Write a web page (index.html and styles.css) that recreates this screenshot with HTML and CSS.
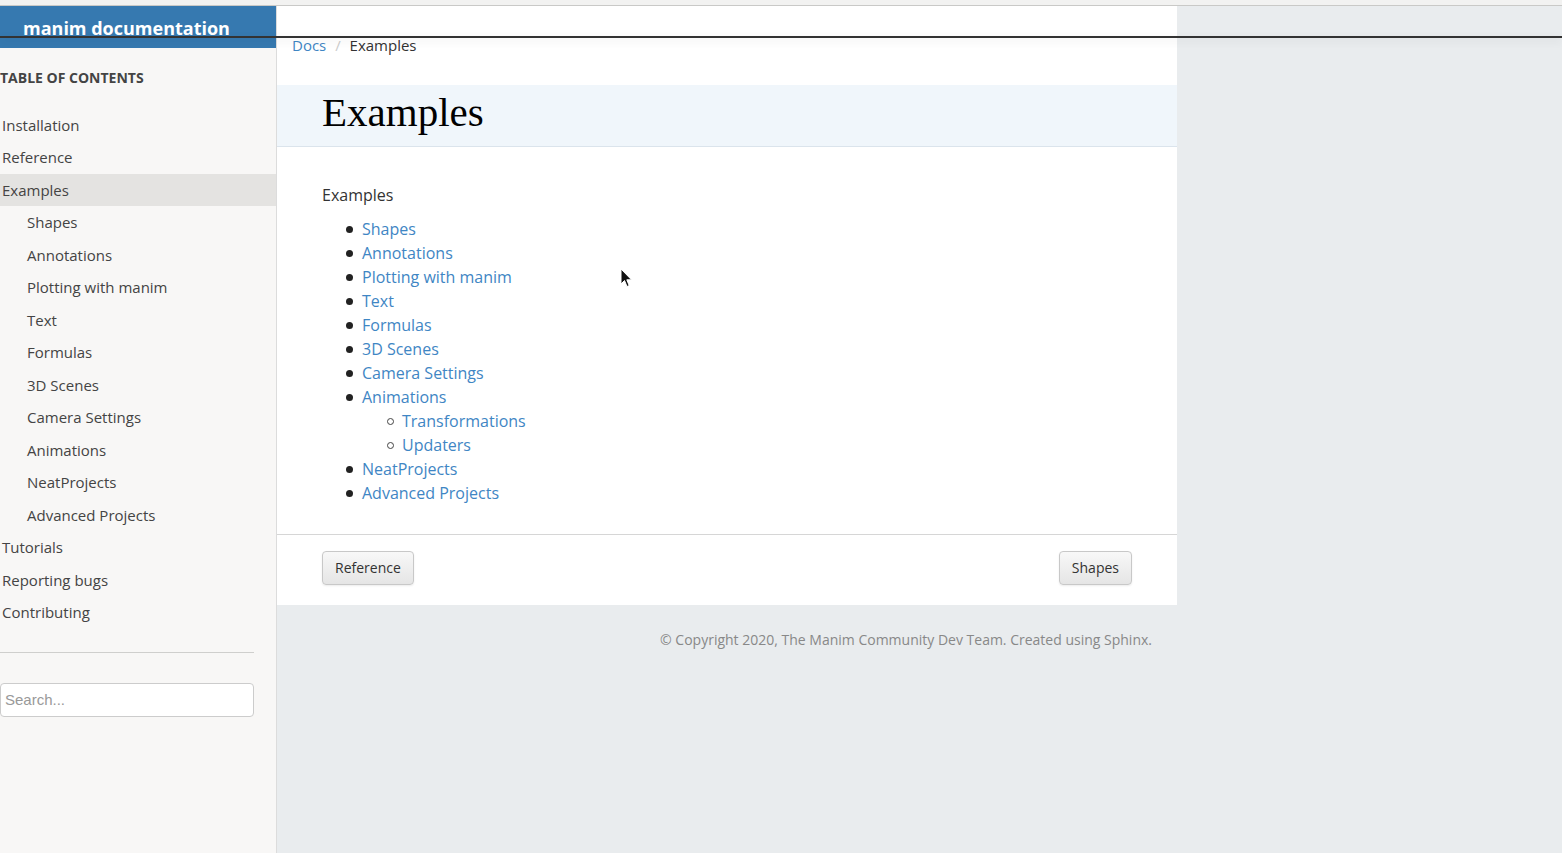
FILE: index.html
```html
<!DOCTYPE html>
<html lang="en">
<head>
    <meta charset="UTF-8">
    <meta name="viewport" content="width=device-width, initial-scale=1.0">
    <title>Examples — manim documentation</title>
    <link rel="stylesheet" href="styles.css">
</head>
<body>
    <div class="top-strip"></div>
    <div class="overlay-line"></div>

    <div class="layout">
        <aside class="sidebar">
            <div class="brand">manim documentation</div>
            <div class="toc-title">Table of Contents</div>
            <ul class="toc">
                <li><a href="#">Installation</a></li>
                <li><a href="#">Reference</a></li>
                <li class="current"><a href="#">Examples</a></li>
                <li class="sub"><a href="#">Shapes</a></li>
                <li class="sub"><a href="#">Annotations</a></li>
                <li class="sub"><a href="#">Plotting with manim</a></li>
                <li class="sub"><a href="#">Text</a></li>
                <li class="sub"><a href="#">Formulas</a></li>
                <li class="sub"><a href="#">3D Scenes</a></li>
                <li class="sub"><a href="#">Camera Settings</a></li>
                <li class="sub"><a href="#">Animations</a></li>
                <li class="sub"><a href="#">NeatProjects</a></li>
                <li class="sub"><a href="#">Advanced Projects</a></li>
                <li><a href="#">Tutorials</a></li>
                <li><a href="#">Reporting bugs</a></li>
                <li><a href="#">Contributing</a></li>
            </ul>
            <hr class="side-rule">
            <input class="search" type="text" placeholder="Search...">
        </aside>

        <div class="main-col">
            <div class="page">
                <div class="breadcrumb">
                    <a href="#">Docs</a>
                    <span class="sep">/</span>
                    <span>Examples</span>
                </div>
                <div class="page-header">
                    <h1>Examples</h1>
                </div>
                <div class="body">
                    <p class="caption">Examples</p>
                    <ul class="links">
                        <li><a href="#">Shapes</a></li>
                        <li><a href="#">Annotations</a></li>
                        <li><a href="#">Plotting with manim</a></li>
                        <li><a href="#">Text</a></li>
                        <li><a href="#">Formulas</a></li>
                        <li><a href="#">3D Scenes</a></li>
                        <li><a href="#">Camera Settings</a></li>
                        <li><a href="#">Animations</a>
                            <ul>
                                <li><a href="#">Transformations</a></li>
                                <li><a href="#">Updaters</a></li>
                            </ul>
                        </li>
                        <li><a href="#">NeatProjects</a></li>
                        <li><a href="#">Advanced Projects</a></li>
                    </ul>
                </div>
                <div class="pager">
                    <a class="btn" href="#">Reference</a>
                    <a class="btn" href="#">Shapes</a>
                </div>
            </div>
            <div class="footer">© Copyright 2020, The Manim Community Dev Team. Created using Sphinx.</div>
        </div>
    </div>

    <svg class="cursor" width="13" height="20" viewBox="0 0 13 20">
        <path d="M1 1 L1 16 L4.5 12.5 L7 18.5 L9.2 17.6 L6.8 11.8 L11.5 11.8 Z" fill="#111" stroke="#fff" stroke-width="1"/>
    </svg>
</body>
</html>
```

FILE: styles.css
```css
body {
    margin: 0;
    background-color: #e9ecee;
    color: #333;
    font-family: "Open Sans", "Noto Sans", sans-serif;
    font-size: 16px;
}
a {
    color: #3f86c4;
    text-decoration: none;
}
.top-strip {
    height: 5px;
    background-color: #f2f2f1;
    border-bottom: 1px solid #c9c9c7;
}
.overlay-line {
    position: absolute;
    left: 0;
    right: 0;
    top: 36px;
    height: 2px;
    background-color: #333;
    box-shadow: 0 3px 9px rgba(0, 0, 0, 0.12);
    z-index: 5;
}
.layout {
    display: flex;
    align-items: stretch;
}

/* sidebar */
.sidebar {
    width: 276px;
    min-height: 847px;
    background-color: #f8f7f6;
    border-right: 1px solid #dcdcdc;
    box-sizing: content-box;
}
.brand {
    height: 42px;
    line-height: 44px;
    background-color: #3679b0;
    color: #fff;
    font-weight: 700;
    font-size: 18px;
    padding-left: 23px;
}
.toc-title {
    margin-top: 20px;
    line-height: 20px;
    font-size: 14px;
    font-weight: 700;
    text-transform: uppercase;
    color: #444;
}
.toc {
    list-style: none;
    margin: 20.75px 0 0;
    padding: 0;
}
.toc li a {
    display: block;
    height: 32.5px;
    line-height: 32.5px;
    padding-left: 2px;
    font-size: 15px;
    color: #444;
}
.toc li.sub a {
    padding-left: 27px;
}
.toc li.current a {
    background-color: #e4e3e1;
}
.side-rule {
    margin: 23px 22px 0 0;
    border: none;
    border-top: 1px solid #cfcfcd;
}
.search {
    display: block;
    margin-top: 30px;
    width: 254px;
    height: 34px;
    box-sizing: border-box;
    border: 1px solid #ccc;
    border-radius: 4px;
    padding: 0 4px;
    font-family: "Liberation Sans", Arial, sans-serif;
    font-size: 15px;
    background-color: #fff;
}
.search::placeholder {
    color: #999;
}

/* main */
.main-col {
    width: 900px;
}
.page {
    background-color: #fff;
}
.breadcrumb {
    height: 79px;
    box-sizing: border-box;
    padding: 29px 15px 0;
    line-height: 20px;
    font-size: 15px;
    color: #333;
}
.breadcrumb .sep {
    color: #ccc;
    margin: 0 5px;
}
.page-header {
    background-color: #f0f6fb;
    border-bottom: 1px solid #dbe4ec;
    height: 61px;
    padding: 0 45px;
}
.page-header h1 {
    margin: 0;
    font-family: "Liberation Serif", "Times New Roman", serif;
    font-weight: 400;
    font-size: 41px;
    line-height: 55px;
    color: #000;
}
.body {
    padding: 36px 45px 29px;
}
.caption {
    margin: 0 0 10px;
    line-height: 24px;
}
.links,
.links ul {
    list-style: none;
    margin: 0;
    padding-left: 40px;
    line-height: 24px;
}
.links li::before {
    content: "";
    display: inline-block;
    width: 7px;
    height: 7px;
    margin-left: -16px;
    margin-right: 9px;
    border-radius: 50%;
    background-color: #222;
    vertical-align: 2px;
}
.links ul li::before {
    width: 5px;
    height: 5px;
    border: 1.2px solid #444;
    background-color: transparent;
    margin-left: -15px;
    margin-right: 8px;
}
.pager {
    border-top: 1px solid #d6d6d6;
    display: flex;
    justify-content: space-between;
    padding: 16px 45px 20px;
}
.btn {
    display: block;
    height: 34px;
    line-height: 32px;
    box-sizing: border-box;
    padding: 0 12px;
    font-size: 14px;
    color: #333;
    border: 1px solid #c8c8c8;
    border-radius: 4px;
    background: linear-gradient(#f8f8f8, #e5e5e5);
    box-shadow: 0 1px 2px rgba(0, 0, 0, 0.08);
}
.footer {
    text-align: right;
    padding: 25px 25px 0 0;
    line-height: 20px;
    font-size: 14px;
    color: #888;
}
.cursor {
    position: absolute;
    left: 620px;
    top: 268px;
    z-index: 10;
}
```
